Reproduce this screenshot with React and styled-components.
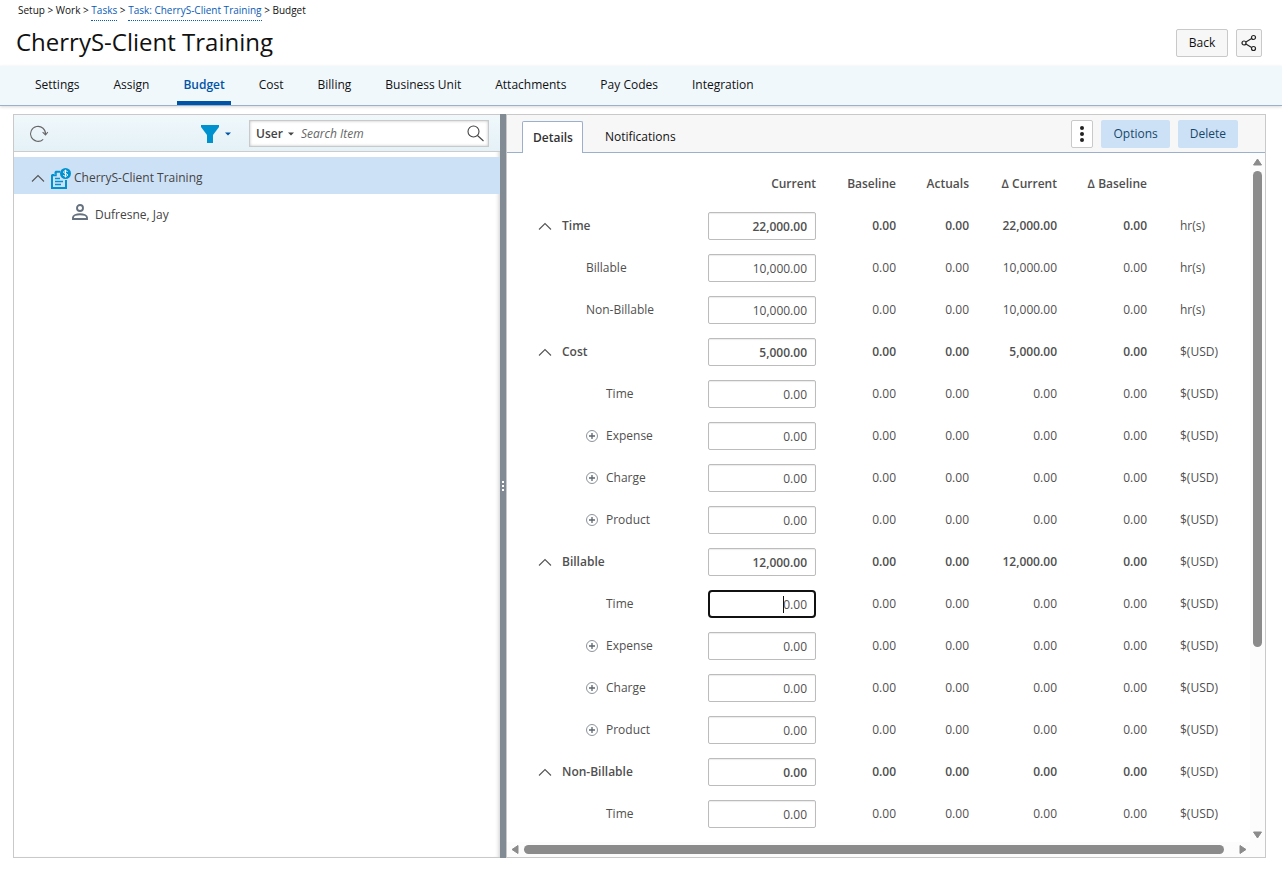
import React, { useState } from 'react';
import styled, { createGlobalStyle, css } from 'styled-components';

const GlobalStyle = createGlobalStyle`
  *, *::before, *::after { box-sizing: border-box; }
  html, body, #root { height: 100%; }
  body {
    margin: 0;
    background: #fff;
    color: #111;
    font: 12px/16px 'Open Sans', 'Noto Sans', sans-serif;
  }
  button, input, select { font: inherit; color: inherit; }
  button { cursor: pointer; }
  svg { display: block; }
`;

const emphasis = css`
  font-weight: 600;
`;

const Page = styled.div`
  display: flex;
  flex-direction: column;
  min-height: 100%;
`;

const Breadcrumb = styled.nav`
  padding: 3px 18px 0;
  font-size: 10px;
  line-height: 14px;
`;

const CrumbLink = styled.a`
  display: inline-block;
  height: 18px;
  color: #0a5cb8;
  text-decoration: none;
  border-bottom: 1px dotted #0a5cb8;
`;

const TitleBar = styled.header`
  display: flex;
  align-items: center;
  justify-content: space-between;
  height: 45px;
  padding: 0 20px 1px 16px;
`;

const Title = styled.h1`
  margin: 0;
  padding-bottom: 2px;
  font-size: 24px;
  line-height: 32px;
  font-weight: 400;
`;

const Actions = styled.div`
  display: flex;
  gap: 8px;
`;

const PlainButton = styled.button`
  display: flex;
  align-items: center;
  justify-content: center;
  width: ${(p) => p.$width};
  height: 28px;
  padding: 0;
  border: 1px solid #c9c9c9;
  border-radius: 2px;
  background: ${(p) => (p.$white ? '#fff' : '#f7f7f7')};
`;

const PrimaryButton = styled.button`
  height: 28px;
  padding: 0 12px;
  border: 0;
  border-radius: 2px;
  background: #cde1f6;
  color: #17486b;
`;

const MainNav = styled.nav`
  display: flex;
  gap: 22px;
  height: 40px;
  padding-left: 29px;
  background: #f0f8fc;
  border-bottom: 1px solid #9bb0cd;
  box-shadow: 0 1px 3px rgba(0, 0, 0, 0.15);
`;

const NavLink = styled.a`
  padding: 11px 6px 0;
  color: #111;
  text-decoration: none;
  border-bottom: 4px solid transparent;
  ${(p) => p.$active && css`
    ${emphasis}
    color: #0054a6;
    border-color: #0054a6;
  `}
`;

const Workspace = styled.main`
  flex: 1;
  display: grid;
  grid-template-columns: minmax(0, 487fr) 6px minmax(0, 760fr);
  margin: 8px 16px 23px 13px;
`;

const TreePane = styled.section`
  border: 1px solid #c9c9c9;
  border-right: 0;
  box-shadow: inset -4px 0 4px -3px rgba(0, 0, 0, 0.2);
`;

const TreeToolbar = styled.div`
  display: flex;
  align-items: center;
  height: 37px;
  padding: 1px 11px 0 15px;
  background: linear-gradient(#f0f8fb, #e4f1f7);
  border-bottom: 1px solid #ccc;
`;

const IconButton = styled.button`
  display: flex;
  align-items: center;
  gap: ${(p) => p.$gap || '0'};
  padding: 0;
  border: 0;
  background: none;
`;

const FilterButton = styled(IconButton)`
  margin: 0 18px 0 auto;
`;

const SearchBox = styled.div`
  display: flex;
  align-items: center;
  width: 240px;
  height: 27px;
  padding: 0 4px 0 6px;
  background: #fff;
  border: 1px solid #c9c9c9;
  box-shadow: inset 0 0 3px rgba(0, 0, 0, 0.25);
  color: #444;
`;

const ScopeSelect = styled.select`
  ${emphasis}
  appearance: none;
  width: 32px;
  padding: 0;
  border: 0;
  background: none;
`;

const SearchInput = styled.input`
  flex: 1;
  min-width: 0;
  margin-left: 7px;
  padding: 0;
  border: 0;
  outline: 0;
  background: none;
  font-style: italic;
  &::placeholder { color: #666; opacity: 1; }
`;

const Tree = styled.ul`
  list-style: none;
  margin: 5px 0 0;
  padding: 0;
`;

const TreeRow = styled.li`
  display: flex;
  align-items: center;
  gap: ${(p) => (p.$child ? '7px' : '3px')};
  height: 37px;
  padding: 0 8px 0 ${(p) => (p.$child ? '58px' : '17px')};
  background: ${(p) => (p.$selected ? '#cde1f6' : 'transparent')};
  color: #444;
`;

const TreeLabel = styled.span`
  padding-top: 4px;
`;

const ChevronSlot = styled.button`
  height: 20px;
  margin-right: 3px;
  padding: 4px 0 0;
  border: 0;
  background: none;
`;

const Divider = styled.div`
  display: flex;
  flex-direction: column;
  align-items: center;
  justify-content: center;
  gap: 2px;
  background: #828a94;
  cursor: col-resize;
`;

const Grip = styled.span`
  width: 2px;
  height: 2px;
  background: #fff;
`;

const DetailPane = styled.section`
  display: flex;
  flex-direction: column;
  border: 1px solid #c9c9c9;
`;

const DetailHeader = styled.div`
  display: flex;
  align-items: center;
  justify-content: space-between;
  height: 38px;
  padding: 0 27px 0 15px;
  background: #f7f7f7;
  border-bottom: 1px solid #9bb0cd;
`;

const TabList = styled.div`
  display: flex;
  align-self: flex-end;
  gap: 11px;
  margin-bottom: -1px;
`;

const Tab = styled.button`
  height: 32px;
  padding: 0 10px 2px;
  border: 1px solid transparent;
  border-bottom: 0;
  border-radius: 2px 2px 0 0;
  background: none;
  ${(p) => p.$active && css`
    ${emphasis}
    padding: 0 9px 0 10px;
    color: #333;
    background: #fff;
    border-color: #9bb0cd;
  `}
`;

const ScrollFrame = styled.div`
  flex: 1;
  display: grid;
  grid-template: minmax(0, 1fr) 15px / minmax(0, 1fr) 15px;
`;

const ScrollContent = styled.div`
  overflow: auto;
  scrollbar-width: none;
  padding-top: 10px;
`;

const ScrollTrack = styled.div`
  display: flex;
  align-items: center;
  flex-direction: ${(p) => (p.$vertical ? 'column' : 'row')};
  gap: 4px;
  padding: ${(p) => (p.$vertical ? '5px 0 2px' : '0 3px 0 4px')};
  background: #fcfcfc;
`;

const Rail = styled.div`
  flex: 1;
  display: flex;
  flex-direction: ${(p) => (p.$vertical ? 'column' : 'row')};
`;

const Thumb = styled.div`
  flex: 0 0 ${(p) => p.$size};
  ${(p) => (p.$vertical ? 'width' : 'height')}: 9px;
  border-radius: 5px;
  background: #8b8b8b;
`;

const BudgetTable = styled.table`
  width: 100%;
  min-width: 720px;
  table-layout: fixed;
  border-collapse: collapse;
  color: #505050;
`;

const Column = styled.col`
  width: ${(p) => p.$width};
`;

const Row = styled.tr`
  height: 42px;
  font-weight: ${(p) => (p.$strong ? 600 : 400)};
`;

const HeadCell = styled.th`
  ${emphasis}
  padding: 0;
  text-align: right;
`;

const LabelCell = styled.th`
  padding: 0 0 0 ${(p) => ['31px', '79px', '99px', '79px'][p.$indent]};
  font-weight: inherit;
  text-align: left;
`;

const Label = styled.span`
  display: flex;
  align-items: center;
  gap: ${(p) => (p.$wide ? '10px' : '8px')};
`;

const ValueCell = styled.td`
  padding: 0;
  text-align: right;
`;

const UnitCell = styled.td`
  padding: 0 0 0 33px;
  font-weight: 400;
`;

const Field = styled.div`
  position: relative;
  ${(p) => p.$caret && css`
    &::after {
      content: '';
      position: absolute;
      top: 6px;
      right: 32px;
      width: 1px;
      height: 17px;
      background: #111;
    }
  `}
`;

const AmountInput = styled.input`
  display: block;
  width: 100%;
  height: 28px;
  padding: 0 8px;
  border: 1px solid #bcbcbc;
  border-radius: 2px;
  outline: 0;
  background: #fff;
  box-shadow: inset 0 1px 1px rgba(0, 0, 0, 0.08);
  font-weight: inherit;
  text-align: right;
  ${(p) => p.$current && css`
    padding: 0 7px;
    border: 2px solid #111;
    border-radius: 4px;
    box-shadow: none;
    caret-color: transparent;
  `}
`;

const ChevronUp = () => (
  <svg width="14" height="16" viewBox="0 0 14 16" fill="none" stroke="#555" strokeWidth="1.1">
    <path d="M1 11.500 7 5.500l6 6" />
  </svg>
);

const PlusCircle = () => (
  <svg width="12" height="12" viewBox="0 0 12 12" fill="none" stroke="#5c6670">
    <circle cx="6" cy="6" r="5.500" strokeWidth="0.700" />
    <path d="M6 3v6M3 6h6" strokeWidth="1.300" />
  </svg>
);

const CaretDown = ({ color }) => (
  <svg width="6" height="4" viewBox="0 0 6 4" fill={color}>
    <path d="M0 0.500h6L3 3.500z" />
  </svg>
);

const ShareIcon = () => (
  <svg width="16" height="18" viewBox="0 0 16 18" fill="none" stroke="#222" strokeWidth="1.200">
    <circle cx="3" cy="9" r="2" />
    <circle cx="12.500" cy="3.500" r="2" />
    <circle cx="12.500" cy="14.500" r="2" />
    <path d="M4.900 7.900 10.600 4.600M4.900 10.100l5.700 3.300" />
  </svg>
);

const KebabIcon = () => (
  <svg width="4" height="16" viewBox="0 0 4 16" fill="#222">
    <circle cx="2" cy="2" r="2" />
    <circle cx="2" cy="8" r="2" />
    <circle cx="2" cy="14" r="2" />
  </svg>
);

const RefreshIcon = () => (
  <svg width="20" height="18" viewBox="0 0 20 18" fill="none" stroke="#666" strokeWidth="1.100">
    <path d="M14.200 14.300A7.500 7.500 0 1 1 16.500 9.500" />
    <path d="M13.600 7.200l2.900 2.800 2.300-2.800" />
  </svg>
);

const FunnelIcon = () => (
  <svg width="18" height="18" viewBox="0 0 18 18" fill="#0092cf">
    <path d="M0 0h18v2l-6 8v8H6v-8L0 2z" />
  </svg>
);

const SearchIcon = () => (
  <svg width="17" height="17" viewBox="0 0 17 17" fill="none" stroke="#444" strokeWidth="1.100">
    <circle cx="6.500" cy="6.500" r="5.500" />
    <path d="M10.500 10.500l6 5.500" />
  </svg>
);

const TaskIcon = () => (
  <svg width="20" height="26" viewBox="0 -5 20 26" fill="none">
    <path d="M9 3.800H5L1 7.500V20h14v-8" stroke="#0092cf" strokeWidth="2" />
    <path d="M0 2h3.500v4H0z" fill="#cde1f6" />
    <path d="M5 4v3.500H1" stroke="#0092cf" strokeWidth="1.500" />
    <path d="M4 10.500h5M4 13.500h8M4 16.500h6" stroke="#0092cf" strokeWidth="1.500" />
    <circle cx="14.500" cy="5.500" r="5.500" fill="#0092cf" />
    <path d="M16.500 3.800c-.3-.7-1-1-2-1s-1.900.4-1.900 1.300c0 2 4 .9 4 2.900 0 .9-.9 1.300-2 1.300s-1.900-.4-2.200-1.200M14.500 1.700v7.700" stroke="#fff" />
  </svg>
);

const PersonIcon = () => (
  <svg width="16" height="18" viewBox="0 0 16 18" fill="none" stroke="#66717f" strokeWidth="1.900">
    <circle cx="8" cy="4" r="3" />
    <path d="M1 15v-1.500C1 11.500 4.500 10.300 8 10.300s7 1.200 7 3.200V15z" />
  </svg>
);

const Arrow = ({ direction }) => {
  const shapes = {
    up: 'M4.500 1 8.500 7h-8z',
    down: 'M4.500 7 .5 1h8z',
    left: 'M1 4.500 7 .5v8z',
    right: 'M8 4.500 2 .5v8z',
  };
  return (
    <svg width="9" height="9" viewBox="0 0 9 9" fill="#8b8b8b" stroke="#8b8b8b" strokeLinejoin="round">
      <path d={shapes[direction]} />
    </svg>
  );
};

const navItems = ['Settings', 'Assign', 'Budget', 'Cost', 'Billing', 'Business Unit', 'Attachments', 'Pay Codes', 'Integration'];

const columns = ['Current', 'Baseline', 'Actuals', '∆ Current', '∆ Baseline'];
const columnWidths = ['201px', '108px', '80px', '73px', '88px', '90px', 'auto'];

const GROUP = 0;
const CHILD = 1;
const LEAF = 2;
const EXPANDABLE = 3;

const budgetRows = [
  ['Time', GROUP, '22,000.00', 'hr(s)'],
  ['Billable', CHILD, '10,000.00', 'hr(s)'],
  ['Non-Billable', CHILD, '10,000.00', 'hr(s)'],
  ['Cost', GROUP, '5,000.00', '$(USD)'],
  ['Time', LEAF, '0.00', '$(USD)'],
  ['Expense', EXPANDABLE, '0.00', '$(USD)'],
  ['Charge', EXPANDABLE, '0.00', '$(USD)'],
  ['Product', EXPANDABLE, '0.00', '$(USD)'],
  ['Billable', GROUP, '12,000.00', '$(USD)'],
  ['Time', LEAF, '0.00', '$(USD)', true],
  ['Expense', EXPANDABLE, '0.00', '$(USD)'],
  ['Charge', EXPANDABLE, '0.00', '$(USD)'],
  ['Product', EXPANDABLE, '0.00', '$(USD)'],
  ['Non-Billable', GROUP, '0.00', '$(USD)'],
  ['Time', LEAF, '0.00', '$(USD)'],
];

function BudgetRow({ name, kind, amount, unit, current }) {
  const [value, setValue] = useState(amount);
  return (
    <Row $strong={kind === GROUP}>
      <LabelCell scope="row" $indent={kind}>
        <Label $wide={kind === GROUP}>
          {kind === GROUP && <IconButton aria-label={`Collapse ${name}`}><ChevronUp /></IconButton>}
          {kind === EXPANDABLE && <IconButton aria-label={`Expand ${name}`}><PlusCircle /></IconButton>}
          {name}
        </Label>
      </LabelCell>
      <ValueCell>
        <Field $caret={current}>
          <AmountInput
            aria-label={`${name} current`}
            $current={current}
            value={value}
            onChange={(e) => setValue(e.target.value)}
          />
        </Field>
      </ValueCell>
      <ValueCell>0.00</ValueCell>
      <ValueCell>0.00</ValueCell>
      <ValueCell>{amount}</ValueCell>
      <ValueCell>0.00</ValueCell>
      <UnitCell>{unit}</UnitCell>
    </Row>
  );
}

export default function App() {
  return (
    <Page>
      <GlobalStyle />
      <Breadcrumb aria-label="Breadcrumb">
        Setup &gt; Work &gt; <CrumbLink href="#tasks">Tasks</CrumbLink>
        {' > '}
        <CrumbLink href="#task">Task: CherryS-Client Training</CrumbLink>
        {' > Budget'}
      </Breadcrumb>
      <TitleBar>
        <Title>CherryS-Client Training</Title>
        <Actions>
          <PlainButton $width="52px">Back</PlainButton>
          <PlainButton $width="26px" aria-label="Share"><ShareIcon /></PlainButton>
        </Actions>
      </TitleBar>
      <MainNav>
        {navItems.map((item) => (
          <NavLink key={item} href={`#${item}`} $active={item === 'Budget'}>{item}</NavLink>
        ))}
      </MainNav>
      <Workspace>
        <TreePane>
          <TreeToolbar>
            <IconButton aria-label="Refresh"><RefreshIcon /></IconButton>
            <FilterButton $gap="6px" aria-label="Filter">
              <FunnelIcon />
              <CaretDown color="#0054a6" />
            </FilterButton>
            <SearchBox>
              <ScopeSelect aria-label="Search scope"><option>User</option></ScopeSelect>
              <CaretDown color="#444" />
              <SearchInput aria-label="Search" placeholder="Search Item" />
              <IconButton aria-label="Search"><SearchIcon /></IconButton>
            </SearchBox>
          </TreeToolbar>
          <Tree>
            <TreeRow $selected>
              <ChevronSlot aria-label="Collapse"><ChevronUp /></ChevronSlot>
              <TaskIcon />
              <TreeLabel>CherryS-Client Training</TreeLabel>
            </TreeRow>
            <TreeRow $child>
              <PersonIcon />
              <TreeLabel>Dufresne, Jay</TreeLabel>
            </TreeRow>
          </Tree>
        </TreePane>
        <Divider role="separator" aria-orientation="vertical">
          <Grip /><Grip /><Grip />
        </Divider>
        <DetailPane>
          <DetailHeader>
            <TabList role="tablist">
              <Tab role="tab" aria-selected="true" $active>Details</Tab>
              <Tab role="tab" aria-selected="false">Notifications</Tab>
            </TabList>
            <Actions>
              <PlainButton $width="22px" $white aria-label="More"><KebabIcon /></PlainButton>
              <PrimaryButton>Options</PrimaryButton>
              <PrimaryButton>Delete</PrimaryButton>
            </Actions>
          </DetailHeader>
          <ScrollFrame>
            <ScrollContent>
              <BudgetTable>
                <colgroup>
                  {columnWidths.map((w, i) => <Column key={i} $width={w} />)}
                </colgroup>
                <thead>
                  <Row>
                    <HeadCell aria-label="Item" />
                    {columns.map((c) => <HeadCell key={c} scope="col">{c}</HeadCell>)}
                    <HeadCell aria-label="Unit" />
                  </Row>
                </thead>
                <tbody>
                  {budgetRows.map(([name, kind, amount, unit, current], i) => (
                    <BudgetRow key={i} name={name} kind={kind} amount={amount} unit={unit} current={current} />
                  ))}
                </tbody>
              </BudgetTable>
            </ScrollContent>
            <ScrollTrack $vertical>
              <Arrow direction="up" />
              <Rail $vertical><Thumb $vertical $size="calc(100% - 180px)" /></Rail>
              <Arrow direction="down" />
            </ScrollTrack>
            <ScrollTrack>
              <Arrow direction="left" />
              <Rail><Thumb $size="calc(100% - 10px)" /></Rail>
              <Arrow direction="right" />
            </ScrollTrack>
            <ScrollTrack />
          </ScrollFrame>
        </DetailPane>
      </Workspace>
    </Page>
  );
}
